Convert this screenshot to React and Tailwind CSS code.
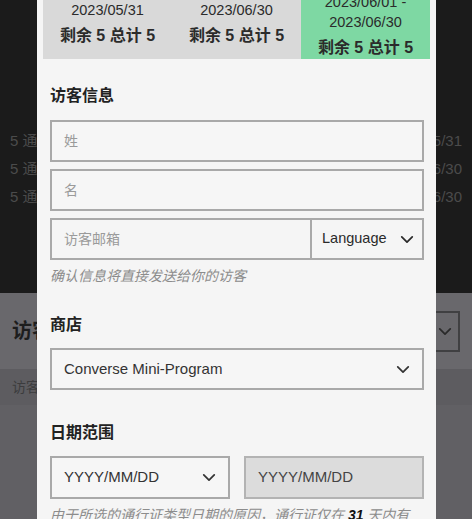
import React from 'react';

const font = { fontFamily: '"Liberation Sans", "Noto Sans CJK SC", sans-serif' };

const Chevron = ({ className = '' }) => (
  <svg viewBox="0 0 16 10" className={className} fill="none" stroke="currentColor" strokeWidth="2" strokeLinecap="round" strokeLinejoin="round">
    <polyline points="2,2 8,8 14,2" />
  </svg>
);

const passes = [
  { lines: ['2023/05/31'], left: 5, total: 5, active: false },
  { lines: ['2023/06/30'], left: 5, total: 5, active: false },
  { lines: ['2023/06/01 -', '2023/06/30'], left: 5, total: 5, active: true },
];

const bgRows = ['2023/05/31', '2023/06/30', '2023/06/30'];

const Background = () => (
  <div className="flex flex-col h-full">
    <div className="h-[293px] bg-[#1b1b1b] pt-[127px]">
      {bgRows.map((d, i) => (
        <div key={i} className="flex justify-between pl-[10px] pr-[10px] leading-[28px] text-[15px] text-[#4b4b4b]">
          <span>5 通行证</span>
          <span>{d}</span>
        </div>
      ))}
    </div>
    <div className="h-[76px] bg-[#69686c] flex items-center justify-between pl-[12px] pr-[12px]">
      <span className="text-[20px] font-bold text-[#1d1d1d]">访客</span>
      <div className="w-[120px] h-[41px] border-2 border-[#404042] flex items-center justify-end pr-[6px] text-[#2a2a2a]">
        <Chevron className="w-[14px] h-[9px]" />
      </div>
    </div>
    <div className="h-[36px] bg-[#5d5c60] flex items-center pl-[12px] text-[14px] text-[#3c3c3e]">访客名称</div>
    <div className="flex-1 bg-[#616064]" />
  </div>
);

const Field = ({ children, className = '' }) => (
  <div className={`h-[42px] border-2 border-[#a9a9a9] bg-[#f6f6f6] flex items-center px-[12px] ${className}`}>{children}</div>
);

export default function App() {
  return (
    <div className="relative w-[472px] h-[519px] overflow-hidden" style={font}>
      <Background />
      <div className="absolute left-[37px] top-0 w-[399px] h-full bg-[#f5f5f5] overflow-hidden">
        <div className="mx-[6px] -mt-[13px] grid grid-cols-3 h-[72px]">
          {passes.map((p, i) => (
            <div
              key={i}
              className={`flex flex-col items-center justify-center text-[#2b2b2b] ${p.active ? 'bg-[#7ed8a3] pt-[4px]' : 'bg-[#d9d9d9]'}`}
            >
              {p.lines.map((l) => (
                <div key={l} className="text-[14.5px] leading-[20px]">{l}</div>
              ))}
              <div className="mt-[6px] text-[16px] leading-[20px] font-bold">
                剩余 {p.left} 总计 {p.total}
              </div>
            </div>
          ))}
        </div>

        <div className="px-[13px] pr-[12px]">
          <h3 className="mt-[25px] mb-[12px] text-[16px] leading-[24px] font-bold text-[#222]">访客信息</h3>
          <div className="flex flex-col gap-[7px]">
            <Field><span className="text-[14px] text-[#9a9a9a]">姓</span></Field>
            <Field><span className="text-[14px] text-[#9a9a9a]">名</span></Field>
            <div className="h-[42px] border-2 border-[#a9a9a9] flex">
              <div className="flex-1 flex items-center px-[12px] text-[14px] text-[#9a9a9a]">访客邮箱</div>
              <div className="w-[112px] border-l-2 border-[#a9a9a9] flex items-center justify-between pl-[10px] pr-[8px] text-[#2a2a2a]">
                <span className="text-[14.5px]">Language</span>
                <Chevron className="w-[14px] h-[9px]" />
              </div>
            </div>
          </div>
          <p className="mt-[6px] text-[14px] leading-[20px] italic text-[#8c8c8c]">确认信息将直接发送给你的访客</p>

          <h3 className="mt-[27px] mb-[11px] text-[16px] leading-[24px] font-bold text-[#222]">商店</h3>
          <Field className="justify-between text-[#333]">
            <span className="text-[15px]">Converse Mini-Program</span>
            <Chevron className="w-[14px] h-[9px]" />
          </Field>

          <h3 className="mt-[31px] mb-[11px] text-[16px] leading-[24px] font-bold text-[#222]">日期范围</h3>
          <div className="grid grid-cols-2 gap-[14px]">
            <Field className="h-[43px] justify-between text-[#333]">
              <span className="text-[15px]">YYYY/MM/DD</span>
              <Chevron className="w-[14px] h-[9px]" />
            </Field>
            <div className="h-[43px] border-2 border-[#b3b3b3] bg-[#dcdcdc] flex items-center px-[12px] text-[15px] text-[#444]">
              YYYY/MM/DD
            </div>
          </div>
          <p className="mt-[6px] pr-[8px] text-[14px] leading-[20px] italic text-[#8c8c8c]">
            由于所选的通行证类型日期的原因，通行证仅在 <b className="text-[#111]">31</b> 天内有效
          </p>
        </div>
      </div>
    </div>
  );
}
